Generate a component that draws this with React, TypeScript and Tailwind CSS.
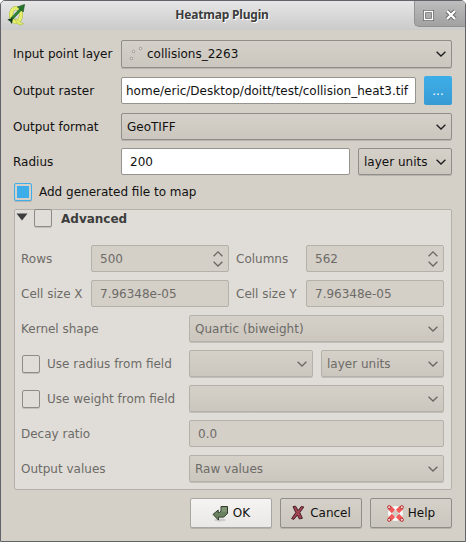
import type { ReactNode } from "react";

function Chevron({ up = false, dim = false }: { up?: boolean; dim?: boolean }) {
  return (
    <svg width="10" height="6" viewBox="0 0 10 6" fill="none" stroke={dim ? "#6b6863" : "#1c1c1c"} strokeWidth="1.3" className="shrink-0">
      <path d={up ? "M.6 5.2 5 .9l4.4 4.3" : "M.6.7 5 5 9.4.7"} />
    </svg>
  );
}

function Combo({ children, className = "h-[27px]", dim = false }: { children?: ReactNode; className?: string; dim?: boolean }) {
  return (
    <div
      className={`flex items-center justify-between rounded-[2px] border bg-linear-to-b from-[#d5d1c9] to-[#cbc6be] pr-[5px] pl-[5px] shadow-[0_1px_0_#0002] ${
        dim ? "border-[#b4b1aa]" : "border-[#8f8e88]"
      } ${className}`}
    >
      <span className="flex items-center">{children}</span>
      <Chevron dim={dim} />
    </div>
  );
}

function Field({ children, className = "pl-[8px]", dim = false, spin = false }: { children?: ReactNode; className?: string; dim?: boolean; spin?: boolean }) {
  return (
    <div
      className={`flex h-[27px] items-center justify-between overflow-hidden rounded-[2px] border pr-[5px] ${
        dim ? "border-[#b4b1aa] bg-[#d4cfc7]" : "border-[#94938e] bg-white"
      } ${className}`}
    >
      <span>{children}</span>
      {spin && (
        <span className="flex flex-col gap-[4px]">
          <Chevron up dim />
          <Chevron dim />
        </span>
      )}
    </div>
  );
}

function Check({ on = false }: { on?: boolean }) {
  return (
    <span
      className={`flex size-[18px] shrink-0 items-center justify-center rounded-[2px] border shadow-[0_1px_0_#0002] ${
        on ? "border-[#3daee9] bg-[#d4cfc7]" : "border-[#8d8b86] bg-[#e0ddd8]"
      }`}
    >
      {on && <span className="size-3 bg-[#3daee9]" />}
    </span>
  );
}

function PushButton({ children, className }: { children: ReactNode; className: string }) {
  return (
    <button
      className={`flex h-[30px] w-[82px] items-center justify-center rounded-[2px] border bg-linear-to-b shadow-[0_1px_0_#0002] ${className}`}
    >
      {children}
    </button>
  );
}

function QgisLogo() {
  return (
    <svg width="20" height="22" viewBox="0 0 20 22">
      <ellipse cx="9" cy="11" rx="5" ry="7" fill="none" stroke="#8ea23a" strokeWidth="4" />
      <ellipse cx="9" cy="11" rx="5" ry="7" fill="none" stroke="#e6ef6c" strokeWidth="3.3" />
      <path d="M8 15c3-1 4 4.2 8.8 4.5-1.6 2.4-5.7 1.7-7-1.1z" fill="#e6ef6c" stroke="#9aad45" strokeWidth=".5" />
      <path d="M4.5 15 14.6 4.4" stroke="#1d5c24" strokeWidth="2.8" />
      <path d="M5.5 13.6 14.6 4.4" stroke="#338c38" strokeWidth="1.6" />
      <path d="m10.4 3 7.2-2.6-1.4 7.6z" fill="#27752d" stroke="#174f20" strokeWidth=".6" />
      <path d="m.4 15.6 4-1.4 1.4 1.6-1 4.2-1.6-2.6z" fill="#153d1c" />
    </svg>
  );
}

function OkIcon() {
  return (
    <svg width="17" height="17" viewBox="0 0 17 17">
      <ellipse cx="8" cy="15" rx="6" ry="1.4" fill="#0002" />
      <path d="M9 1.5h6.5v7l-3.8 3.6H6.5v3L1 9.4 6.2 5v2.4h1.6L9 6z" fill="#6b8260" stroke="#303d2a" strokeWidth="1" />
      <path d="M9.6 2.2h5.2v4.6H9.6z" fill="#9cac90" opacity=".5" />
    </svg>
  );
}

function CancelIcon() {
  return (
    <svg width="14" height="16" viewBox="0 0 14 16">
      <path d="m2 1.6 2.6-.4L7 5.6l3.4-4.2 2.4.6-4 5.6 2.6 5.6-3 .8L6.4 10l-3.6 4.4-2.2-.8 4.2-6z" fill="#a34451" stroke="#48202a" strokeWidth="1" />
    </svg>
  );
}

function HelpIcon() {
  return (
    <svg width="17" height="17" viewBox="0 0 17 17">
      <circle cx="8.5" cy="8.5" r="5.3" fill="none" stroke="#fafafa" strokeWidth="4.4" />
      <g stroke="#f05a58" strokeWidth="4.6">
        <path d="M2.8 2.8 6.5 6.5M14.2 2.8l-3.7 3.7M2.8 14.2l3.7-3.7M14.2 14.2l-3.7-3.7" />
      </g>
      <g fill="#ecd5cf" stroke="#b92e32" strokeWidth="1">
        <circle cx="2.2" cy="2.2" r="1.6" />
        <circle cx="14.8" cy="2.2" r="1.6" />
        <circle cx="2.2" cy="14.8" r="1.6" />
        <circle cx="14.8" cy="14.8" r="1.6" />
      </g>
    </svg>
  );
}

export default function App() {
  return (
    <div className="h-[542px] w-[466px] bg-white">
      <div className="flex h-full flex-col overflow-hidden rounded-t-[5px] border border-[#626368] bg-[#d4cfc7] font-['DejaVu_Sans',sans-serif] text-[12px] leading-4 whitespace-nowrap text-[#111]">
        <header className="flex h-[29px] shrink-0 bg-linear-to-b from-[#e6e6e6] to-[#cbcbcb]">
          <div className="w-[51px] pt-[3px] pl-[6px]">
            <QgisLogo />
          </div>
          <h1 className="flex-1 pt-[6px] pr-[22px] text-center font-['Noto_Sans','Open_Sans',sans-serif] text-[12px] font-bold tracking-[-0.2px] text-[#3c3c3c] [text-shadow:1px_1px_0_#fff]">
            Heatmap Plugin
          </h1>
          <div className="flex h-[26px] w-[51px] items-center gap-[11px] rounded-bl-[5px] border-b border-l border-[#929292] bg-linear-to-b from-[#bdbdbd] to-[#a1a1a1] pt-[3px] pl-[8px]">
            <svg width="11" height="11" viewBox="0 0 11 11" fill="none">
              <path d="M1.5 1.5h8v8h-8z" stroke="#666" strokeWidth="3" />
              <path d="M1.5 1.5h8v8h-8z" stroke="#fff" strokeWidth="1.4" />
            </svg>
            <svg width="12" height="12" viewBox="0 0 12 12">
              <path d="m2 2 8 8m0-8-8 8" stroke="#666" strokeWidth="4.2" />
              <path d="m2 2 8 8m0-8-8 8" stroke="#fff" strokeWidth="2.4" />
            </svg>
          </div>
        </header>

        <main className="flex flex-col pt-[10px] pr-[13px] pl-[12px]">
          <div className="flex h-[28px] items-center">
            <span className="w-[108px]">Input point layer</span>
            <Combo className="h-[28px] flex-1">
              <svg width="20" height="20" viewBox="0 0 20 20" fill="#eee" stroke="#8b8b86" strokeWidth=".9">
                <circle cx="4.5" cy="14.5" r="1.2" />
                <circle cx="6.5" cy="7.5" r="1.2" />
                <circle cx="13.5" cy="4.5" r="1.2" />
              </svg>
              collisions_2263
            </Combo>
          </div>
          <div className="mt-[8px] flex h-[29px] items-center">
            <span className="w-[108px]">Output raster</span>
            <Field className="w-[295px] pl-[4px]">home/eric/Desktop/doitt/test/collision_heat3.tif</Field>
            <button className="ml-[8px] h-[29px] w-[28px] rounded-[2px] bg-linear-to-b from-[#3daee9] to-[#379bd3] text-white">...</button>
          </div>
          <div className="mt-[8px] flex items-center">
            <span className="w-[108px]">Output format</span>
            <Combo className="h-[27px] flex-1">GeoTIFF</Combo>
          </div>
          <div className="mt-[8px] flex items-center">
            <span className="w-[108px]">Radius</span>
            <Field className="w-[229px] pl-[8px]">200</Field>
            <Combo className="ml-[8px] h-[27px] w-[94px]">layer units</Combo>
          </div>
          <label className="mt-[8px] ml-px flex items-center gap-[7px]">
            <Check on />
            Add generated file to map
          </label>

          <section className="mt-[8px] ml-px h-[281px] rounded-[2px] border border-[#b4b1aa] bg-[#e0ddd8] pr-[7px] pl-[6px] text-[#6d6b67]">
            <div className="-mt-px -ml-[5px] flex h-[18px] items-center">
              <svg width="12" height="8" viewBox="0 0 12 8" className="mr-[6px] mb-[2px]">
                <path d="M.5.5h11L6 7.5z" fill="#3d3d3d" />
              </svg>
              <Check />
              <span className="ml-[9px] pt-px font-bold text-[#3d3d3d]">Advanced</span>
            </div>
            <div className="mt-[18px] grid grid-cols-[70px_138px_7px_70px_138px] items-center gap-y-[8px]">
              <span>Rows</span>
              <Field dim spin>500</Field>
              <span />
              <span>Columns</span>
              <Field dim spin>562</Field>
              <span>Cell size X</span>
              <Field dim>7.96348e-05</Field>
              <span />
              <span>Cell size Y</span>
              <Field dim>7.96348e-05</Field>
            </div>
            <div className="mt-[8px] grid grid-cols-[168px_255px] items-center gap-y-[8px]">
              <span>Kernel shape</span>
              <Combo dim>Quartic (biweight)</Combo>
              <label className="ml-px flex items-center gap-[7px]">
                <Check />
                Use radius from field
              </label>
              <div className="flex gap-[8px]">
                <Combo dim className="h-[27px] w-[124px]" />
                <Combo dim className="h-[27px] w-[123px]">layer units</Combo>
              </div>
              <label className="ml-px flex items-center gap-[7px]">
                <Check />
                Use weight from field
              </label>
              <Combo dim />
              <span>Decay ratio</span>
              <Field dim>0.0</Field>
              <span>Output values</span>
              <Combo dim>Raw values</Combo>
            </div>
          </section>

          <footer className="mt-[8px] flex justify-end gap-[8px]">
            <PushButton className="gap-[4px] border-[#a8a6a1] from-[#f5f4f2] to-[#e9e8e6]">
              <OkIcon />
              OK
            </PushButton>
            <PushButton className="gap-[5px] border-[#8f8e88] from-[#d5d1c9] to-[#cbc6be]">
              <CancelIcon />
              Cancel
            </PushButton>
            <PushButton className="gap-[4px] border-[#8f8e88] from-[#d5d1c9] to-[#cbc6be]">
              <HelpIcon />
              Help
            </PushButton>
          </footer>
        </main>
      </div>
    </div>
  );
}
